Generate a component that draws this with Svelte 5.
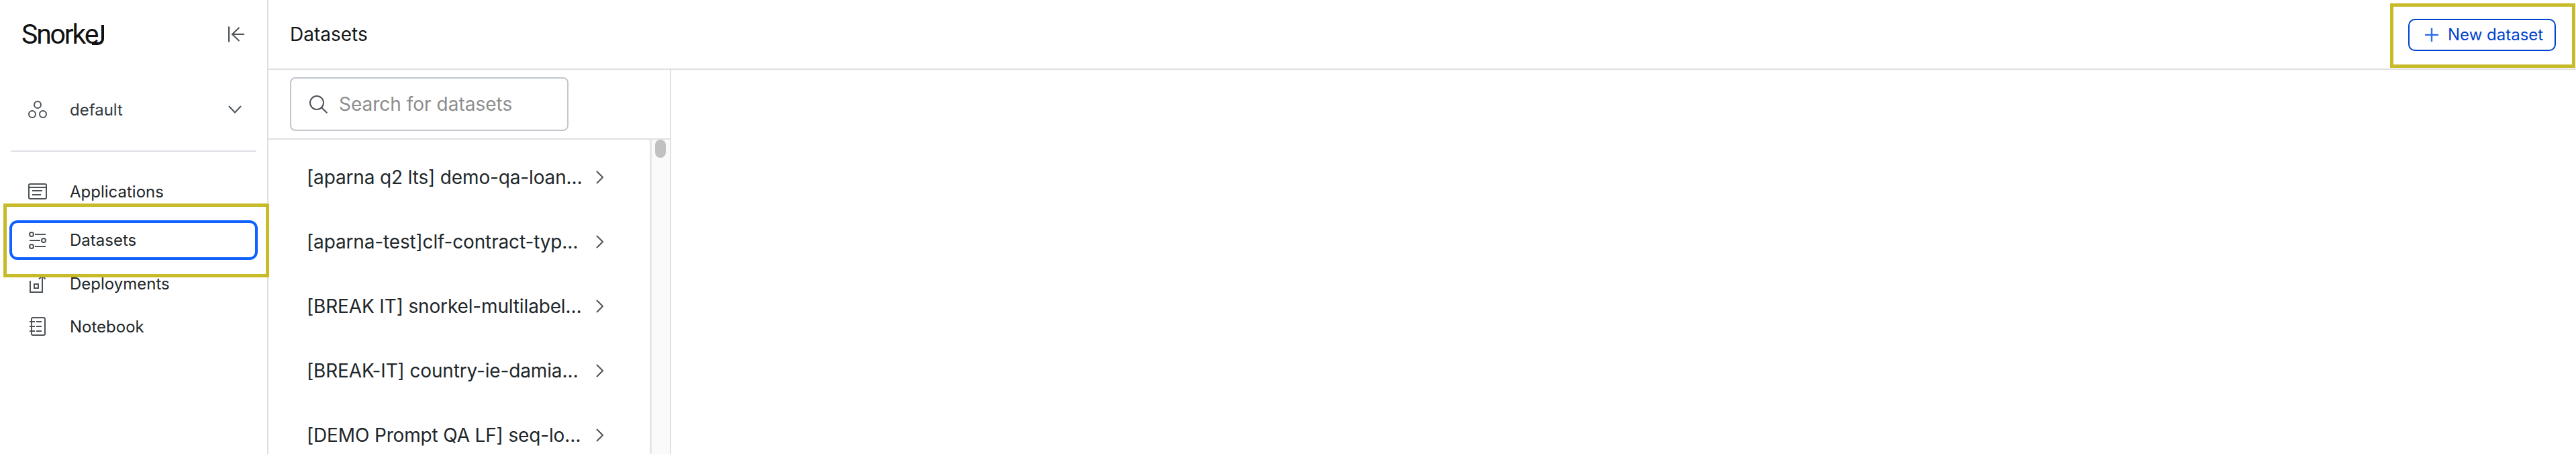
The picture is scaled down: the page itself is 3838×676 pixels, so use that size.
<script>
  const nav = [
    { label: 'Applications', icon: 'apps' },
    { label: 'Datasets', icon: 'data' },
    { label: 'Deployments', icon: 'deploy' },
    { label: 'Notebook', icon: 'note' }
  ];
  const items = [
    '[aparna q2 lts] demo-qa-loan…',
    '[aparna-test]clf-contract-typ…',
    '[BREAK IT] snorkel-multilabel…',
    '[BREAK-IT] country-ie-damia…',
    '[DEMO Prompt QA LF] seq-lo…'
  ];
</script>

<div class="app">
  <aside class="sidebar">
    <div class="brand">
      <div class="logo"><span>Snorke</span><i class="hook"></i></div>
      <svg class="collapse" width="24" height="24" viewBox="0 0 24 24" fill="none" stroke="#4d5358" stroke-width="2">
        <path d="M1 0.500V23.500" stroke-width="2.400" />
        <path d="M24 12H6M16.500 2L6 12l10.500 10" />
      </svg>
    </div>
    <div class="workspace">
      <svg width="28" height="26" viewBox="0 0 28 26" fill="none" stroke="#4d5358" stroke-width="2">
        <circle cx="14" cy="6" r="5" />
        <circle cx="6" cy="20" r="5" />
        <circle cx="22" cy="20" r="5" />
      </svg>
      <span class="ws-name">default</span>
      <svg class="chev" width="20" height="12" viewBox="0 0 20 12" fill="none" stroke="#4d5358" stroke-width="2">
        <path d="M1 1l9 9.500L19 1" />
      </svg>
    </div>
    <div class="divider"></div>
    <nav class="nav">
      {#each nav as n}
        <div class="nav-row" class:active={n.icon === 'data'}>
          <svg class="nav-icon" width="28" height="28" viewBox="0 0 28 28" fill="none" stroke="#4d5358" stroke-width="2">
            {#if n.icon === 'apps'}
              <rect x="1" y="3" width="26" height="22" rx="2" />
              <path d="M1 8h26M6 13h15M6 19h13" />
            {:else if n.icon === 'data'}
              <circle cx="5" cy="5" r="3" />
              <path d="M10 5h16" />
              <circle cx="23" cy="14" r="3" />
              <path d="M2 14h16" />
              <circle cx="5" cy="23" r="3" />
              <path d="M10 23h16" />
            {:else if n.icon === 'deploy'}
              <path d="M3 10v17h18V5" />
              <path d="M16 7.500L21 3l4.500 4.500" />
              <rect x="9" y="15" width="6" height="6" />
            {:else}
              <rect x="5" y="1" width="20" height="26" rx="2" />
              <path d="M2 7h8M2 14h8M2 21h8M12 7h8M12 14h8M12 21h8" />
            {/if}
          </svg>
          <span>{n.label}</span>
        </div>
      {/each}
    </nav>
  </aside>

  <main class="main">
    <header class="topbar">
      <h1>Datasets</h1>
      <button class="new-btn">
        <svg width="22" height="22" viewBox="0 0 22 22" fill="none" stroke="#2f6fed" stroke-width="2.400">
          <path d="M11 1v20M1 11h20" />
        </svg>
        New dataset
      </button>
    </header>
    <div class="content">
      <section class="panel">
        <div class="search-wrap">
          <div class="search">
            <svg width="27" height="27" viewBox="0 0 27 27" fill="none" stroke="#4d5358" stroke-width="2">
              <circle cx="11" cy="11" r="10" />
              <path d="M18 18l8.300 8.300" />
            </svg>
            <span class="placeholder">Search for datasets</span>
          </div>
        </div>
        <div class="list-area">
          <ul class="list">
            {#each items as it}
              <li>
                <span class="name">{it}</span>
                <svg width="11" height="20" viewBox="0 0 11 20" fill="none" stroke="#4d5358" stroke-width="2">
                  <path d="M1 1l9 9-9 9" />
                </svg>
              </li>
            {/each}
          </ul>
          <div class="scroll"><div class="thumb"></div></div>
        </div>
      </section>
    </div>
  </main>

  <div class="mark mark-nav"></div>
  <div class="mark mark-btn"></div>
</div>

<style>
  :global(body) {
    margin: 0;
    background: #fff;
  }
  .app {
    position: relative;
    display: flex;
    width: 3838px;
    height: 676px;
    overflow: hidden;
    font-family: Inter, "Liberation Sans", sans-serif;
    color: #21272a;
  }
  .sidebar {
    box-sizing: border-box;
    width: 400px;
    flex: none;
    border-right: 2px solid #e0e0e0;
    padding: 0 16px;
  }
  .brand {
    display: flex;
    align-items: center;
    justify-content: space-between;
    height: 102px;
    padding: 0 16px;
  }
  .logo {
    display: flex;
    align-items: flex-end;
    height: 32px;
    font-family: Roboto, sans-serif;
    font-size: 41px;
    font-weight: 400;
    line-height: 32px;
    color: #111;
  }
  .logo span {
    letter-spacing: -2.200px;
  }
  .hook {
    display: block;
    width: 18px;
    height: 30px;
    margin-left: -8px;
    box-sizing: border-box;
    border-right: 4px solid #111;
    border-bottom: 4px solid #111;
    border-bottom-right-radius: 9px;
  }
  .collapse {
    margin-right: 2px;
  }
  .workspace {
    display: flex;
    align-items: center;
    height: 122px;
    padding: 0 22px 0 26px;
  }
  .ws-name {
    flex: 1;
    margin-left: 34px;
    font-size: 24px;
    color: #343a3f;
  }
  .divider {
    height: 2px;
    background: #dde1e6;
  }
  .nav {
    display: flex;
    flex-direction: column;
    padding-top: 27px;
  }
  .nav-row {
    display: flex;
    align-items: center;
    gap: 34px;
    height: 64px;
    padding-left: 26px;
    font-size: 24px;
  }
  .nav-row.active {
    box-sizing: border-box;
    height: 59px;
    width: 370px;
    margin: 11px 0 3px -2px;
    padding-left: 24px;
    border: 4px solid #0f62fe;
    border-radius: 12px;
  }
  .nav-icon {
    flex: none;
  }
  .main {
    flex: 1;
    min-width: 0;
    display: flex;
    flex-direction: column;
  }
  .topbar {
    box-sizing: border-box;
    display: flex;
    align-items: center;
    justify-content: space-between;
    height: 104px;
    border-bottom: 2px solid #e0e0e0;
    padding: 0 30px 0 32px;
  }
  h1 {
    margin: 0;
    font-size: 28px;
    font-weight: 400;
    color: #121619;
  }
  .new-btn {
    display: flex;
    align-items: center;
    gap: 13px;
    box-sizing: border-box;
    width: 220px;
    height: 48px;
    margin-top: 1px;
    padding: 0 0 0 22px;
    background: #fff;
    border: 2px solid #0043ce;
    border-radius: 10px;
    color: #0043ce;
    font: 400 24px Inter, sans-serif;
  }
  .content {
    flex: 1;
    min-height: 0;
  }
  .panel {
    box-sizing: border-box;
    width: 600px;
    height: 100%;
    border-right: 2px solid #e0e0e0;
    display: flex;
    flex-direction: column;
  }
  .search-wrap {
    box-sizing: border-box;
    height: 104px;
    padding: 11px 0 0 32px;
    border-bottom: 2px solid #e0e0e0;
  }
  .search {
    box-sizing: border-box;
    display: flex;
    align-items: center;
    gap: 17px;
    width: 415px;
    height: 80px;
    padding-left: 27px;
    border: 2px solid #c1c7cd;
    border-radius: 8px;
  }
  .placeholder {
    font-size: 28px;
    color: #8d8d8d;
  }
  .list-area {
    flex: 1;
    min-height: 0;
    display: flex;
    justify-content: space-between;
  }
  .list {
    list-style: none;
    margin: 0;
    padding: 8px 0 0 57px;
    flex: 1;
  }
  .list li {
    display: flex;
    align-items: center;
    justify-content: space-between;
    width: 442px;
    height: 96px;
  }
  .name {
    font-size: 28px;
    letter-spacing: -0.150px;
    white-space: nowrap;
    color: #21272a;
  }
  .scroll {
    box-sizing: border-box;
    width: 30px;
    flex: none;
    background: #fafafa;
    border-left: 3px solid #e6e6e6;
    padding-left: 5px;
  }
  .thumb {
    width: 16px;
    height: 27px;
    border-radius: 8px;
    background: #c1c1c1;
  }
  .mark {
    position: absolute;
    box-sizing: border-box;
    border: 5px solid #c8bb2a;
    pointer-events: none;
  }
  .mark-nav {
    left: 5px;
    top: 303px;
    width: 396px;
    height: 110px;
  }
  .mark-btn {
    left: 3561px;
    top: 5px;
    width: 276px;
    height: 96px;
  }
</style>
